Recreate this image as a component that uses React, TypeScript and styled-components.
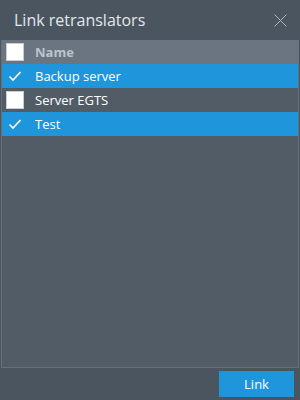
import React, { useState } from 'react'
import styled, { createGlobalStyle } from 'styled-components'

const Global = createGlobalStyle`
  html, body {
    margin: 0;
    padding: 0;
    background: #4b5560;
  }
  * { box-sizing: border-box; }
`

const Dialog = styled.div`
  width: 300px;
  height: 400px;
  display: flex;
  flex-direction: column;
  background: #4b5560;
  font-family: 'Open Sans', 'Liberation Sans', sans-serif;
  color: #fff;
`

const TitleBar = styled.header`
  height: 40px;
  flex: none;
  display: flex;
  align-items: center;
  justify-content: space-between;
  padding: 0 12px 0 14px;
`

const Title = styled.h1`
  margin: 0;
  font-size: 16px;
  font-weight: 400;
  color: #e2e7eb;
`

const Close = styled.button`
  width: 16px;
  height: 16px;
  padding: 0;
  border: 0;
  background: none;
  display: flex;
  align-items: center;
  justify-content: center;
`

const List = styled.div`
  flex: 1;
  margin: 0 1px;
  border: 1px solid #66717c;
  border-top: 0;
  background: #525c67;
  display: flex;
  flex-direction: column;
`

const Row = styled.div<{ $head?: boolean; $selected?: boolean }>`
  height: 24px;
  display: flex;
  align-items: center;
  gap: 11px;
  padding-left: 4px;
  font-size: 13px;
  background: ${p => (p.$head ? '#6a7581' : p.$selected ? '#1f95db' : 'transparent')};
  color: ${p => (p.$head ? '#bcc4cc' : '#ffffff')};
  font-weight: ${p => (p.$head ? 700 : 400)};
  cursor: default;
`

const Box = styled.span<{ $checked?: boolean }>`
  width: 18px;
  height: 18px;
  flex: none;
  display: flex;
  align-items: center;
  justify-content: center;
  background: ${p => (p.$checked ? 'transparent' : '#ffffff')};
  border: 1px solid ${p => (p.$checked ? 'transparent' : '#c9ced3')};
`

const Footer = styled.footer`
  height: 32px;
  flex: none;
  display: flex;
  align-items: center;
  justify-content: flex-end;
  padding-right: 6px;
`

const Button = styled.button`
  width: 75px;
  height: 26px;
  border: 0;
  background: #1f95db;
  color: #fff;
  font-family: inherit;
  font-size: 13px;
`

const Check = () => (
  <svg width="14" height="12" viewBox="0 0 14 12">
    <path d="M1.5 6.5 L5 10 L12.5 2" fill="none" stroke="#fff" strokeWidth="1.6" />
  </svg>
)

const items = [
  { name: 'Backup server', on: true },
  { name: 'Server EGTS', on: false },
  { name: 'Test', on: true },
]

export default function App() {
  const [rows, setRows] = useState(items)
  const toggle = (i: number) =>
    setRows(r => r.map((x, j) => (j === i ? { ...x, on: !x.on } : x)))

  return (
    <>
      <Global />
      <Dialog>
        <TitleBar>
          <Title>Link retranslators</Title>
          <Close aria-label="Close">
            <svg width="13" height="13" viewBox="0 0 13 13">
              <path d="M0.5 0.5 L12.5 12.5 M12.5 0.5 L0.5 12.5" stroke="#aeb5bc" strokeWidth="1" />
            </svg>
          </Close>
        </TitleBar>
        <List>
          <Row $head>
            <Box />
            Name
          </Row>
          {rows.map((r, i) => (
            <Row key={r.name} $selected={r.on} onClick={() => toggle(i)}>
              <Box $checked={r.on}>{r.on && <Check />}</Box>
              {r.name}
            </Row>
          ))}
        </List>
        <Footer>
          <Button>Link</Button>
        </Footer>
      </Dialog>
    </>
  )
}
